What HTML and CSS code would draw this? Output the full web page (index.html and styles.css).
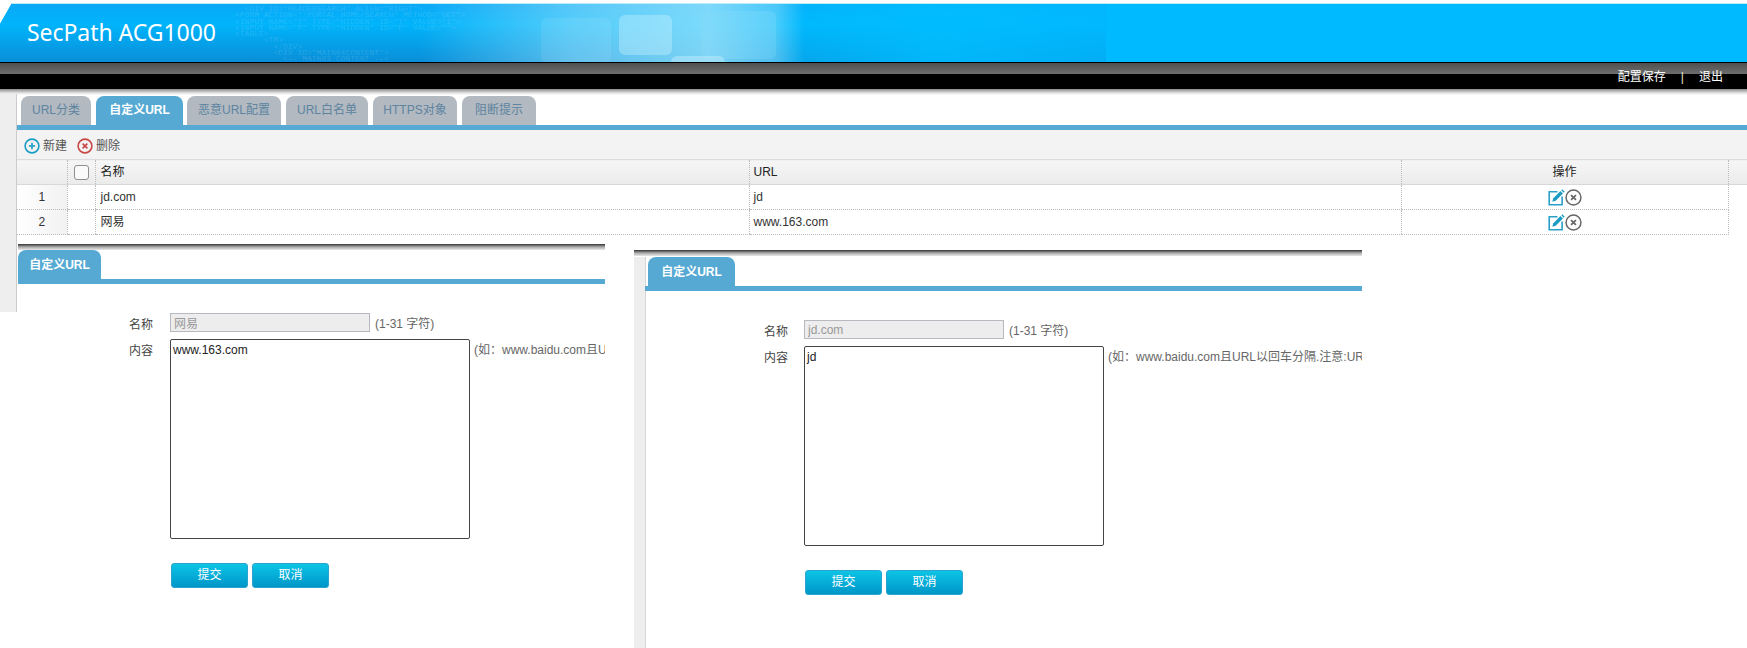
FILE: index.html
```html
<!DOCTYPE html>
<html lang="zh-CN">
<head>
<meta charset="utf-8">
<title>SecPath ACG1000</title>
<link rel="stylesheet" href="styles.css">
</head>
<body>
<header class="banner">
  <div class="banner-art">
    <span class="glow"></span>
    <span class="sq sq-a"></span>
    <span class="sq sq-b"></span>
    <span class="sq sq-c"></span>
    <span class="sq sq-d"></span>
    <pre class="code">  &lt;DIV ID="HEADERSEARCH" ALIGN="RIGHT"&gt;
&lt;FORM ACTION="/PORTAL_HOME/SEARCH" METHOD="GET"&gt;
&lt;INPUT NAME="T" TYPE="HIDDEN" ID="T" VALUE="I"&gt;
&lt;INPUT NAME="P" TYPE="HIDDEN" ID="P" VALUE=""&gt;
&lt;TABLE&gt;
      &lt;TR&gt;
        &lt;/DIV&gt;
        &lt;DIV ID="MAIN04CONTENT"&gt;
          &lt;-- MAIN03 CONTENT --&gt;</pre>
  </div>
  <h1 class="brand">SecPath ACG1000</h1>
</header>
<nav class="topbar">
  <a class="top-link">配置保存</a>
  <span class="top-sep">|</span>
  <a class="top-link">退出</a>
</nav>
<div class="bar-shadow"></div>

<div class="shell">
  <aside class="side"></aside>
  <main class="main">
    <ul class="tabs">
      <li class="tab t1">URL分类</li>
      <li class="tab t2 active">自定义URL</li>
      <li class="tab t3">恶意URL配置</li>
      <li class="tab t4">URL白名单</li>
      <li class="tab t5">HTTPS对象</li>
      <li class="tab t6">阻断提示</li>
    </ul>
    <div class="toolbar">
      <span class="tool">
        <svg class="ico" viewBox="0 0 16 16"><circle cx="8" cy="8" r="6.9" fill="none" stroke="#1b9cc4" stroke-width="1.6"/><path d="M8 4.8v6.4M4.8 8h6.4" stroke="#1b9cc4" stroke-width="1.6"/></svg>
        新建
      </span>
      <span class="tool">
        <svg class="ico" viewBox="0 0 16 16"><circle cx="8" cy="8" r="6.9" fill="none" stroke="#c94848" stroke-width="1.6"/><path d="M5.6 5.6l4.8 4.8M10.4 5.6l-4.8 4.8" stroke="#c94848" stroke-width="1.6"/></svg>
        删除
      </span>
    </div>
    <table class="grid">
      <colgroup>
        <col class="c-num"><col class="c-chk"><col class="c-name"><col class="c-url"><col class="c-op"><col>
      </colgroup>
      <thead>
        <tr>
          <th class="num"></th>
          <th class="chk"><input class="checkbox" type="checkbox"></th>
          <th>名称</th>
          <th>URL</th>
          <th class="op">操作</th>
          <th class="last"></th>
        </tr>
      </thead>
      <tbody>
        <tr>
          <td class="num">1</td><td></td><td>jd.com</td><td>jd</td>
          <td class="op">
            <span class="actions">
              <svg class="ico-edit" viewBox="0 0 17 17"><path d="M9.5 2.8H1.2v12.9h12.9V7.6" fill="none" stroke="#2aa0c8" stroke-width="1.6"/><path d="M4.3 12.7l1-3.4 7.2-7.2 2.4 2.4-7.2 7.2z" fill="#1b9cc4"/><path d="M13.3 1.3l1-1 2.4 2.4-1 1z" fill="#1b9cc4"/></svg>
              <svg class="ico-del" viewBox="0 0 16 16"><circle cx="8" cy="8" r="7" fill="none" stroke="#666" stroke-width="1.4"/><path d="M5.7 5.7l4.6 4.6M10.3 5.7l-4.6 4.6" stroke="#666" stroke-width="1.6"/></svg>
            </span>
          </td>
        </tr>
        <tr>
          <td class="num">2</td><td></td><td>网易</td><td>www.163.com</td>
          <td class="op">
            <span class="actions">
              <svg class="ico-edit" viewBox="0 0 17 17"><path d="M9.5 2.8H1.2v12.9h12.9V7.6" fill="none" stroke="#2aa0c8" stroke-width="1.6"/><path d="M4.3 12.7l1-3.4 7.2-7.2 2.4 2.4-7.2 7.2z" fill="#1b9cc4"/><path d="M13.3 1.3l1-1 2.4 2.4-1 1z" fill="#1b9cc4"/></svg>
              <svg class="ico-del" viewBox="0 0 16 16"><circle cx="8" cy="8" r="7" fill="none" stroke="#666" stroke-width="1.4"/><path d="M5.7 5.7l4.6 4.6M10.3 5.7l-4.6 4.6" stroke="#666" stroke-width="1.6"/></svg>
            </span>
          </td>
        </tr>
      </tbody>
    </table>
  </main>
</div>

<section class="pane pane-one">
  <div class="pane-shadow"></div>
  <div class="pane-body">
    <div class="pane-tab">自定义URL</div>
    <form class="form">
      <label class="lbl">名称</label>
      <div class="field"><input class="name-input" type="text" value="网易" disabled><span class="note">(1-31 字符)</span></div>
      <label class="lbl">内容</label>
      <div class="field"><textarea class="content-input">www.163.com</textarea><span class="note hint">(如：www.baidu.com且URL以回车分隔.注意:URL</span></div>
      <div class="buttons"><button class="btn" type="button">提交</button><button class="btn" type="button">取消</button></div>
    </form>
  </div>
</section>

<section class="pane pane-two">
  <div class="pane-shadow"></div>
  <div class="pane-body">
    <div class="pane-tab">自定义URL</div>
    <form class="form">
      <label class="lbl">名称</label>
      <div class="field"><input class="name-input" type="text" value="jd.com" disabled><span class="note">(1-31 字符)</span></div>
      <label class="lbl">内容</label>
      <div class="field"><textarea class="content-input">jd</textarea><span class="note hint">(如：www.baidu.com且URL以回车分隔.注意:URL</span></div>
      <div class="buttons"><button class="btn" type="button">提交</button><button class="btn" type="button">取消</button></div>
    </form>
  </div>
</section>
</body>
</html>
```

FILE: styles.css
```css
* { box-sizing: border-box; }

html, body {
  margin: 0;
  padding: 0;
  height: 648px;
  overflow: hidden;
  background: #fff;
}

body {
  position: relative;
  padding-top: 3px;
  font: 12px/1.2 "Liberation Sans", "Noto Sans CJK SC", sans-serif;
  color: #333;
}

/* banner */
.banner {
  position: relative;
  height: 60px;
  background: #00baff;
  border-bottom: 1px solid #000;
  border-top: 1px solid #bfeafa;
  overflow: hidden;
  clip-path: polygon(12px 0, 100% 0, 100% 100%, 0 100%, 0 21px);
}

.banner-art {
  position: absolute;
  left: 0;
  top: 0;
  width: 1106px;
  height: 100%;
  background: linear-gradient(#0aa8f6, #00b4fb 35%, #0a8ed8);
}

.glow {
  position: absolute;
  left: 420px;
  top: 0;
  width: 686px;
  height: 100%;
  background: linear-gradient(90deg,
    rgba(150,225,250,0) 0,
    rgba(150,225,250,.55) 22%,
    rgba(165,232,252,.75) 42%,
    rgba(120,220,252,.6) 52%,
    rgba(0,190,255,.5) 56%,
    rgba(0,190,255,.85) 75%,
    rgba(0,186,255,.7) 100%);
}

.sq {
  position: absolute;
  border-radius: 6px;
}

.sq-a { left: 541px; top: 14px; width: 70px; height: 45px; background: rgba(255,255,255,.08); }
.sq-b { left: 619px; top: 11px; width: 53px; height: 40px; background: rgba(215,247,255,.34); }
.sq-c { left: 701px; top: 7px; width: 75px; height: 48px; background: linear-gradient(135deg, rgba(130,215,245,.35), rgba(180,235,255,.15)); }
.sq-d { left: 671px; top: 52px; width: 54px; height: 20px; background: rgba(220,248,255,.34); }

.code {
  position: absolute;
  left: 235px;
  top: 2px;
  margin: 0;
  font: 8px/6.3px "Liberation Mono", monospace;
  color: rgba(255,255,255,.14);
}

.brand {
  position: relative;
  margin: 0;
  padding: 13px 0 0 27px;
  font: 400 23px/30px "Noto Sans", "Open Sans", sans-serif;
  letter-spacing: -.05px;
  color: #fff;
}

/* top bar */
.topbar {
  display: flex;
  align-items: center;
  justify-content: flex-end;
  height: 26px;
  padding: 2px 24px 0 0;
  background: linear-gradient(#4f4f4f 0, #6e6e6e 11px, #000 11px, #000 100%);
  color: #fff;
}

.top-link { color: #fff; }
.top-sep { margin: 0 15px; color: #e8e8c8; }

.bar-shadow {
  height: 6px;
  background: linear-gradient(#8a8a8a, #e6e6e6 70%, #fff);
}

/* shell */
.shell { display: flex; align-items: flex-start; }

.side {
  flex: 0 0 17px;
  height: 218px;
  margin-top: -1px;
  background: #eee;
  border-right: 1px solid #ccc;
}

.main { flex: 1; min-width: 0; }

.tabs {
  display: flex;
  gap: 5px;
  margin: 0;
  padding: 1px 0 0 4px;
  height: 30px;
  list-style: none;
  border: 0;
}

.tab {
  height: 29px;
  line-height: 29px;
  text-align: center;
  background: #b2b9c0;
  color: #5d84a0;
  border-radius: 8px 8px 0 0;
}

.t1 { width: 70px; }
.t2 { width: 87px; }
.t3 { width: 94px; margin-left: -1px; }
.t4 { width: 82px; }
.t5 { width: 84px; }
.t6 { width: 74px; }

.tab.active {
  background: #55a9d3;
  color: #fff;
  font-weight: 700;
}

/* toolbar */
.toolbar {
  display: flex;
  align-items: center;
  gap: 10px;
  height: 34px;
  padding: 3px 0 0 7px;
  background: #f3f3f3;
  border-top: 5px solid #55a9d3;
  color: #555;
}

.tool { display: flex; align-items: center; gap: 3px; }
.ico { width: 16px; height: 16px; display: block; }
.ico-edit { width: 17px; height: 17px; display: block; }
.ico-del { width: 17px; height: 17px; display: block; }

/* grid */
.grid {
  width: 1730px;
  table-layout: fixed;
  border-collapse: collapse;
  background: #fff;
}

.c-num { width: 50px; }
.c-chk { width: 28px; }
.c-name { width: 654px; }
.c-url { width: 652px; }
.c-op { width: 327px; }

.grid th {
  height: 25px;
  padding: 0 5px;
  font-weight: 400;
  text-align: left;
  color: #222;
  background: linear-gradient(#f6f6f6, #ebebeb);
  border-top: 1px solid #dcdcdc;
  border-bottom: 1px solid #d8d8d8;
  border-left: 1px dotted #bbb;
}

.grid th:first-child { border-left: 0; }
.grid th.op { text-align: center; }
.grid th.chk { padding: 0 0 0 6px; }
.grid th.last { border-left: 1px dotted #bbb; }

.grid td {
  height: 25px;
  padding: 0 5px;
  border-bottom: 1px dotted #bbb;
  border-left: 1px dotted #bbb;
  color: #333;
}

.grid td:nth-child(4), .grid th:nth-child(4) { padding-left: 4px; }

.grid td.num {
  text-align: center;
  border-left: 0;
  background: linear-gradient(90deg, #fff, #f1f1f1);
}

.grid td.op { border-right: 1px dotted #bbb; text-align: center; padding-left: 5px; padding-right: 5px; }

.actions {
  display: inline-flex;
  align-items: center;
  justify-content: center;
  gap: 0;
  vertical-align: middle;
}

.checkbox {
  appearance: none;
  display: block;
  width: 15px;
  height: 15px;
  margin: 0;
  background: #fafafa;
  border: 1px solid #8f8f8f;
  border-radius: 3px;
}

/* pasted panes on the canvas */
.pane {
  position: absolute;
  overflow: hidden;
  background: #fff;
}

.pane-one { left: 18px; top: 244px; width: 587px; height: 404px; }
.pane-two { left: 634px; top: 250px; width: 728px; height: 398px; }

.pane-shadow {
  height: 6px;
  background: linear-gradient(#333, #aaa 50%, #e8e8e8);
}

.pane-two .pane-body {
  height: 100%;
  border-left: 11px solid #eee;
  box-shadow: inset 1px 0 0 #d4d4d4;
}

.pane-tab {
  width: 83px;
  height: 29px;
  line-height: 30px;
  text-align: center;
  color: #fff;
  font-weight: 700;
  background: #55a9d3;
  border-radius: 8px 8px 0 0;
}

.pane-two .pane-tab {
  width: 87px;
  margin: 1px 0 0 3px;
}

.form {
  display: grid;
  grid-template-columns: 135px 1fr;
  column-gap: 17px;
  row-gap: 3px;
  padding-top: 29px;
  border-top: 5px solid #55a9d3;
}

.pane-two .form {
  grid-template-columns: 143px 1fr;
  column-gap: 16px;
}

.lbl {
  text-align: right;
  padding-top: 2px;
  line-height: 21px;
  color: #444;
}

.field { display: flex; align-items: flex-start; white-space: nowrap; }

.name-input {
  width: 200px;
  height: 19px;
  padding: 0 3px;
  border: 1px solid #b8b8c0;
  background: #ededed;
  color: #999;
  font: inherit;
}

.note {
  margin-left: 5px;
  line-height: 23px;
  color: #666;
}

.hint { margin-left: 4px; line-height: 22px; }

.content-input {
  display: block;
  flex: none;
  width: 300px;
  height: 200px;
  padding: 3px 2px;
  margin: 0;
  border: 1px solid #444;
  border-radius: 2px;
  background: #fff;
  color: #222;
  font: inherit;
  resize: none;
  overflow: hidden;
  outline: none;
}

.buttons {
  grid-column: 2;
  display: flex;
  gap: 4px;
  margin-top: 21px;
  padding-left: 1px;
}

.btn {
  width: 77px;
  height: 25px;
  padding: 0;
  border: 1px solid #2aa4cc;
  border-radius: 3px;
  background: linear-gradient(#0cc4e6, #0096c8);
  color: #fff;
  font: inherit;
}
```
